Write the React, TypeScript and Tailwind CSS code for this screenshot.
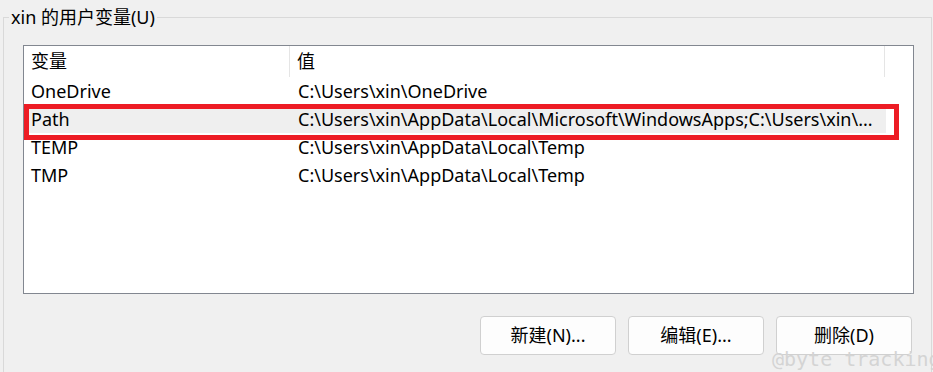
const rows = [
  { name: "OneDrive", value: "C:\\Users\\xin\\OneDrive" },
  {
    name: "Path",
    value: "C:\\Users\\xin\\AppData\\Local\\Microsoft\\WindowsApps;C:\\Users\\xin\\...",
    selected: true,
  },
  { name: "TEMP", value: "C:\\Users\\xin\\AppData\\Local\\Temp" },
  { name: "TMP", value: "C:\\Users\\xin\\AppData\\Local\\Temp" },
];

const buttons = ["新建(N)...", "编辑(E)...", "删除(D)"];

export default function App() {
  return (
    <div
      className="relative w-[933px] h-[372px] overflow-hidden bg-[#f0f0f0] text-black text-[18px]"
      style={{ fontFamily: '"Noto Sans", "Noto Sans CJK SC", sans-serif' }}
    >
      <fieldset className="ml-[3px] mt-[4px] w-[929px] h-[420px] border border-[#d9d9d9] pl-[19px] pr-[17px]">
        <legend className="-ml-[14px] px-[2px] leading-[27px]">xin 的用户变量(U)</legend>

        <div className="relative mt-[14px] h-[249px] border border-[#828790] bg-white">
          <div className="flex h-[31px] items-center">
            <div className="flex h-full w-[266px] items-center border-r border-[#e5e5e5] pl-[7px]">
              变量
            </div>
            <div className="flex h-full w-[595px] items-center border-r border-[#e5e5e5] pl-[7px]">
              值
            </div>
          </div>
          {rows.map((row) => (
            <div
              key={row.name}
              className={`flex h-[28px] w-[862px] items-center whitespace-nowrap ${
                row.selected ? "bg-[#efefef]" : ""
              }`}
            >
              <div className="w-[267px] pl-[7px]">{row.name}</div>
              <div className="pl-[7px]">{row.value}</div>
            </div>
          ))}

          {/* red annotation box drawn over the Path row */}
          <div className="absolute left-0 top-[58px] h-[36px] w-[875px] border-[5px] border-[#ed1c24]" />
        </div>

        <div className="mt-[22px] flex justify-end gap-[12px] pr-[2px]">
          {buttons.map((label) => (
            <button
              key={label}
              className="h-[39px] w-[136px] rounded-[4px] border border-[#d0d0d0] bg-[#fdfdfd] text-[18px]"
            >
              {label}
            </button>
          ))}
        </div>
      </fieldset>

      <div
        className="absolute left-[772px] top-[346px] text-[20px] leading-[26px] text-[#d4d4d4] whitespace-nowrap"
        style={{ fontFamily: '"DejaVu Sans Mono", monospace' }}
      >
        @byte tracking
      </div>
    </div>
  );
}
